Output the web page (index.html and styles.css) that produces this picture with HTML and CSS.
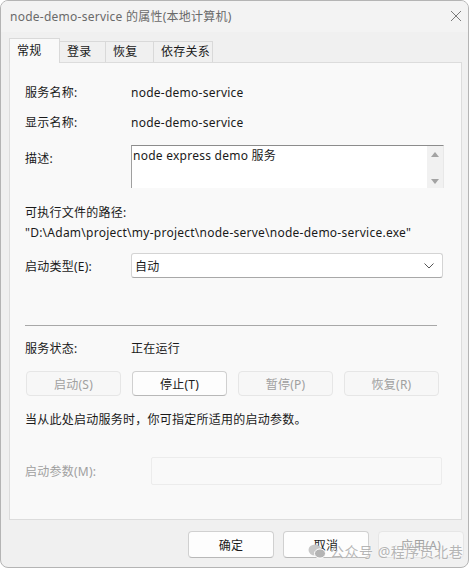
FILE: index.html
```html
<!DOCTYPE html>
<html lang="zh-CN">

<head>
    <meta charset="UTF-8">
    <title>node-demo-service 的属性(本地计算机)</title>
    <link rel="stylesheet" href="styles.css">
</head>

<body>
    <div class="window">
        <!-- Title Bar -->
        <div class="titlebar">
            <span class="title">node-demo-service 的属性(本地计算机)</span>
            <svg class="close" width="12" height="12" viewBox="0 0 12 12">
                <path d="M1 1 L11 11 M11 1 L1 11" stroke="#7a7a7a" stroke-width="1" fill="none" />
            </svg>
        </div>

        <!-- Tabs -->
        <div class="tabs">
            <div class="tab active">常规</div>
            <div class="tab">登录</div>
            <div class="tab">恢复</div>
            <div class="tab">依存关系</div>
        </div>

        <!-- General Panel -->
        <div class="panel">
            <div class="row first">
                <span class="label">服务名称:</span>
                <span>node-demo-service</span>
            </div>
            <div class="row second">
                <span class="label">显示名称:</span>
                <span>node-demo-service</span>
            </div>
            <div class="row desc-row">
                <span class="label desc-label">描述:</span>
                <div class="textarea">
                    <div class="textarea-text">node express demo 服务</div>
                    <div class="scrollbar">
                        <span class="arrow up"></span>
                        <span class="arrow down"></span>
                    </div>
                </div>
            </div>
            <div class="path-label">可执行文件的路径:</div>
            <div class="path-value">"D:\Adam\project\my-project\node-serve\node-demo-service.exe"</div>
            <div class="row type-row">
                <span class="label">启动类型(E):</span>
                <div class="select">
                    <span>自动</span>
                    <svg width="10" height="6" viewBox="0 0 10 6">
                        <path d="M0.5 0.5 L5 5 L9.5 0.5" stroke="#555" stroke-width="1" fill="none" />
                    </svg>
                </div>
            </div>

            <div class="separator"></div>

            <div class="row status-row">
                <span class="label">服务状态:</span>
                <span>正在运行</span>
            </div>
            <div class="status-buttons">
                <button class="btn" disabled>启动(S)</button>
                <button class="btn">停止(T)</button>
                <button class="btn" disabled>暂停(P)</button>
                <button class="btn" disabled>恢复(R)</button>
            </div>
            <div class="hint">当从此处启动服务时，你可指定所适用的启动参数。</div>
            <div class="row param-row">
                <span class="label param-label">启动参数(M):</span>
                <div class="param-input"></div>
            </div>
        </div>

        <!-- Dialog Buttons -->
        <div class="footer">
            <button class="btn footer-btn">确定</button>
            <button class="btn footer-btn">取消</button>
            <button class="btn footer-btn" disabled>应用(A)</button>
        </div>

        <!-- Watermark -->
        <div class="watermark">
            <svg width="18" height="15" viewBox="0 0 18 15">
                <ellipse cx="7" cy="6" rx="6.5" ry="5.5" fill="#c8c8c8" />
                <ellipse cx="12" cy="9.5" rx="5.5" ry="4.6" fill="#b4b4b4" stroke="#fff" stroke-width="1" />
            </svg>
            <span>公众号 @程序员北巷</span>
        </div>
    </div>
</body>

</html>
```

FILE: styles.css
```css
body {
    margin: 0;
    padding: 0;
    background-color: #ffffff;
    font-family: "Noto Sans", "Noto Sans CJK SC", sans-serif;
    font-size: 12px;
    letter-spacing: 0.25px;
    color: #1a1a1a;
}

/* Window frame */
.window {
    position: relative;
    width: 467px;
    height: 566px;
    border: 1px solid #b4b4b4;
    border-radius: 8px;
    background-color: #f0f0f0;
    overflow: hidden;
}

.titlebar {
    height: 32px;
    display: flex;
    align-items: center;
    justify-content: space-between;
    padding: 0 6px 0 9px;
    background-color: #f3f3f3;
    margin-top: -1px;
}

.title {
    color: #6a6a6a;
}

/* Tabs */
.tabs {
    display: flex;
    align-items: flex-end;
    height: 24px;
    margin-left: 8px;
    margin-top: 6px;
    position: relative;
    z-index: 2;
}

.tab {
    box-sizing: border-box;
    height: 21px;
    line-height: 20px;
    padding: 0 0 0 7px;
    white-space: nowrap;
    background-color: #f0f0f0;
    border: 1px solid #d9d9d9;
    border-bottom: none;
    border-left: none;
}

.tab:nth-child(2) {
    width: 46px;
}

.tab:nth-child(3) {
    width: 48px;
}

.tab:nth-child(4) {
    width: 59px;
}

.tab.active {
    width: 51px;
    height: 25px;
    line-height: 24px;
    background-color: #f9f9f9;
    border-left: 1px solid #d9d9d9;
    margin-bottom: -1px;
}

/* Panel */
.panel {
    margin: 0 6px 0 8px;
    height: 456px;
    background-color: #f9f9f9;
    border: 1px solid #dcdcdc;
    padding: 0 0 0 15px;
    position: relative;
    z-index: 1;
}

.row {
    display: flex;
    align-items: center;
}

.label {
    width: 106px;
    flex-shrink: 0;
}

.first {
    height: 20px;
    margin-top: 19px;
}

.second {
    height: 20px;
    margin-top: 10px;
}

.desc-row {
    align-items: flex-start;
    margin-top: 13px;
}

.desc-label {
    padding-top: 4px;
    line-height: 20px;
}

.textarea {
    display: flex;
    width: 311px;
    height: 42px;
    background-color: #ffffff;
    border-top: 1px solid #8c8c8c;
    border-left: 1px solid #a0a0a0;
    border-right: 1px solid #e8e8e8;
}

.textarea-text {
    flex: 1;
    padding: 2px 0 0 1px;
    line-height: 16px;
}

.scrollbar {
    width: 16px;
    background-color: #f1f1f1;
    display: flex;
    flex-direction: column;
    justify-content: space-between;
    align-items: center;
    padding: 6px 0 4px;
}

.arrow {
    width: 0;
    height: 0;
    border-left: 4px solid transparent;
    border-right: 4px solid transparent;
}

.arrow.up {
    border-bottom: 5px solid #a3a3a3;
}

.arrow.down {
    border-top: 5px solid #a3a3a3;
}

.path-label {
    margin-top: 15px;
    line-height: 20px;
}

.path-value {
    line-height: 20px;
}

.type-row {
    margin-top: 10px;
}

.select {
    width: 299px;
    height: 23px;
    display: flex;
    align-items: center;
    justify-content: space-between;
    padding: 0 8px 0 3px;
    background-color: #ffffff;
    border: 1px solid #d4d4d4;
    border-bottom-color: #a8a8a8;
    border-radius: 3px;
}

.separator {
    width: 412px;
    height: 1px;
    margin-top: 47px;
    background-color: #a8a8a8;
}

.status-row {
    height: 20px;
    margin-top: 12px;
}

.status-buttons {
    display: grid;
    grid-template-columns: repeat(4, 95px);
    column-gap: 11px;
    margin-top: 13px;
    margin-left: 1px;
}

.btn {
    height: 25px;
    padding: 0;
    font-family: inherit;
    font-size: 12px;
    letter-spacing: 0.25px;
    color: #1a1a1a;
    background-color: #fdfdfd;
    border: 1px solid #d0d0d0;
    border-bottom-color: #b8b8b8;
    border-radius: 4px;
}

.btn:disabled {
    color: #a0a0a0;
    background-color: #f7f7f7;
    border-color: #e6e6e6;
}

.hint {
    margin-top: 14px;
    line-height: 20px;
}

.param-row {
    margin-top: 27px;
}

.param-label {
    width: 126px;
    color: #a0a0a0;
}

.param-input {
    width: 289px;
    height: 26px;
    background-color: #f9f9f9;
    border: 1px solid #ececec;
    border-radius: 2px;
}

/* Dialog buttons */
.footer {
    display: flex;
    justify-content: flex-end;
    column-gap: 9px;
    padding: 11px 4px 0 0;
}

.footer-btn {
    width: 86px;
    height: 27px;
}

/* Watermark over the buttons */
.watermark {
    position: absolute;
    left: 307px;
    top: 540px;
    display: flex;
    align-items: center;
    column-gap: 4px;
    font-size: 14px;
    color: rgba(150, 150, 150, 0.7);
    text-shadow: 0 0 2px #ffffff;
    letter-spacing: 0.5px;
}
```
